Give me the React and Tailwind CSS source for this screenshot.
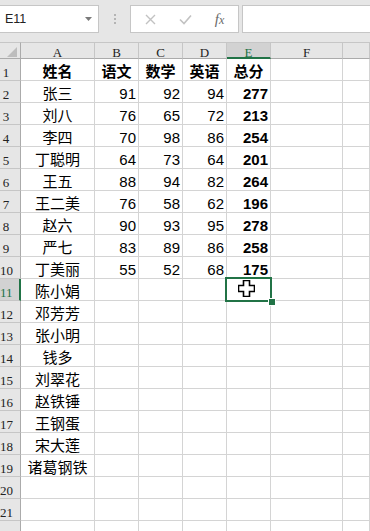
import React from "react";

const COLS = ["A", "B", "C", "D", "E", "F", ""];
const DATA = [
  ["姓名", "语文", "数学", "英语", "总分"],
  ["张三", 91, 92, 94, 277],
  ["刘八", 76, 65, 72, 213],
  ["李四", 70, 98, 86, 254],
  ["丁聪明", 64, 73, 64, 201],
  ["王五", 88, 94, 82, 264],
  ["王二美", 76, 58, 62, 196],
  ["赵六", 90, 93, 95, 278],
  ["严七", 83, 89, 86, 258],
  ["丁美丽", 55, 52, 68, 175],
  ["陈小娟"],
  ["邓芳芳"],
  ["张小明"],
  ["钱多"],
  ["刘翠花"],
  ["赵铁锤"],
  ["王钢蛋"],
  ["宋大莲"],
  ["诸葛钢铁"],
  [],
  [],
  [],
];

function Cursor() {
  return (
    <svg width="17" height="17" viewBox="0 0 17 17" className="absolute left-[11px] top-[1px]">
      <polygon
        points="5.5,0.5 11.5,0.5 11.5,5.5 16.5,5.5 16.5,11.5 11.5,11.5 11.5,16.5 5.5,16.5 5.5,11.5 0.5,11.5 0.5,5.5 5.5,5.5"
        fill="#fff"
        stroke="#000"
        strokeWidth="1.6"
      />
    </svg>
  );
}

export default function App() {
  return (
    <div className="w-[370px] h-[531px] overflow-hidden bg-white font-['Liberation_Sans','Noto_Sans_CJK_SC',sans-serif] text-black">
      {/* toolbar */}
      <div className="h-[42px] bg-[#e6e6e6] flex items-start pt-[5px]">
        <div className="-ml-px w-[100px] h-[28px] bg-white border border-[#c6c6c6] flex items-center justify-between pl-[5px] pr-[6px]">
          <span className="text-[12.5px] leading-none text-[#222] font-['Liberation_Sans',sans-serif]">E11</span>
          <svg width="7" height="4" viewBox="0 0 7 4">
            <polygon points="0,0 7,0 3.5,4" fill="#7a7a7a" />
          </svg>
        </div>
        <div className="w-[31px] h-[28px] flex flex-col items-center justify-center gap-[2px]">
          <span className="w-[2px] h-[2px] bg-[#b4b4b4]" />
          <span className="w-[2px] h-[2px] bg-[#b4b4b4]" />
          <span className="w-[2px] h-[2px] bg-[#b4b4b4]" />
        </div>
        <div className="w-[109px] h-[28px] bg-white border border-[#c6c6c6] flex items-center">
          <div className="w-[37px] flex justify-center pl-[1px]">
            <svg width="11" height="11" viewBox="0 0 11 11">
              <path d="M1 1 L10 10 M10 1 L1 10" stroke="#c2c2c2" strokeWidth="1.4" />
            </svg>
          </div>
          <div className="w-[35px] flex justify-center">
            <svg width="13" height="11" viewBox="0 0 13 11">
              <path d="M1 5.5 L5 9.5 L12 1.5" stroke="#c2c2c2" strokeWidth="1.6" fill="none" />
            </svg>
          </div>
          <div className="flex-1 flex justify-center pr-[2px]">
            <span className="font-['Liberation_Serif',serif] italic text-[15px] leading-none text-[#6a6a6a]">
              f<span className="text-[12px]">x</span>
            </span>
          </div>
        </div>
        <div className="ml-[3px] flex-1 h-[28px] bg-white border border-[#c6c6c6] -mr-px" />
      </div>

      {/* grid */}
      <div className="grid grid-cols-[21px_74px_44px_44px_44px_44px_72px_1fr]">
        <div className="h-[17px] bg-[#e6e6e6] border-t border-[#c6c6c6] border-b border-b-[#ababab] border-r border-r-[#ababab] relative">
          <svg width="10" height="10" viewBox="0 0 10 10" className="absolute left-[7px] top-[4px]">
            <polygon points="10,0 10,10 0,10" fill="#bdbdbd" />
          </svg>
        </div>
        {COLS.map((c, i) => {
          const sel = c === "E";
          return (
            <div
              key={"h" + i}
              className={
                "h-[17px] border-t border-[#c6c6c6] border-r border-r-[#c6c6c6] flex items-end justify-center font-['Liberation_Serif',serif] text-[13px] leading-[10px] " +
                (sel
                  ? "bg-[#d2d2d2] border-b-2 border-b-[#217346] text-[#217346]"
                  : "bg-[#e6e6e6] border-b border-b-[#ababab] text-[#222]")
              }
            >
              <span className={sel ? "mb-[-1px]" : ""}>{c}</span>
            </div>
          );
        })}

        {DATA.map((row, r) => {
          const rn = r + 1;
          const selRow = rn === 11;
          const isHead = r === 0;
          return (
            <React.Fragment key={"r" + r}>
              <div
                className={
                  "h-[22px] border-b border-[#c6c6c6] flex items-end font-['Liberation_Serif',serif] text-[13px] leading-[10px] pb-[2px] " +
                  (selRow
                    ? "bg-[#d2d2d2] border-r-2 border-r-[#217346] text-[#217346]"
                    : "bg-[#e6e6e6] border-r border-r-[#ababab] text-[#222]")
                }
              >
                <span className="w-[12px] text-center whitespace-nowrap">{rn}</span>
              </div>
              {[0, 1, 2, 3, 4, 5, 6].map((ci) => {
                const v = row[ci];
                const isName = ci === 0;
                const bold = isHead || ci === 4;
                const center = isHead || isName;
                const sel = selRow && ci === 4;
                return (
                  <div
                    key={"c" + r + "-" + ci}
                    className={
                      "h-[22px] border-b border-r border-[#d4d4d4] flex items-end text-[15px] leading-[15px] pb-[1px] whitespace-nowrap " +
                      (center ? "justify-center " : "justify-end pr-[2px] ") +
                      (bold ? "font-bold " : "font-normal ") +
                      (sel ? "relative z-10" : "")
                    }
                  >
                    {v !== undefined ? <span>{v}</span> : null}
                    {sel ? (
                      <div className="absolute -left-[2px] -top-[2px] -right-[2px] -bottom-[2px] border-2 border-[#217346]">
                        <Cursor />
                        <div className="absolute -right-[6px] -bottom-[6px] w-[8px] h-[8px] bg-[#217346] border border-white" />
                      </div>
                    ) : null}
                  </div>
                );
              })}
            </React.Fragment>
          );
        })}
      </div>
    </div>
  );
}
